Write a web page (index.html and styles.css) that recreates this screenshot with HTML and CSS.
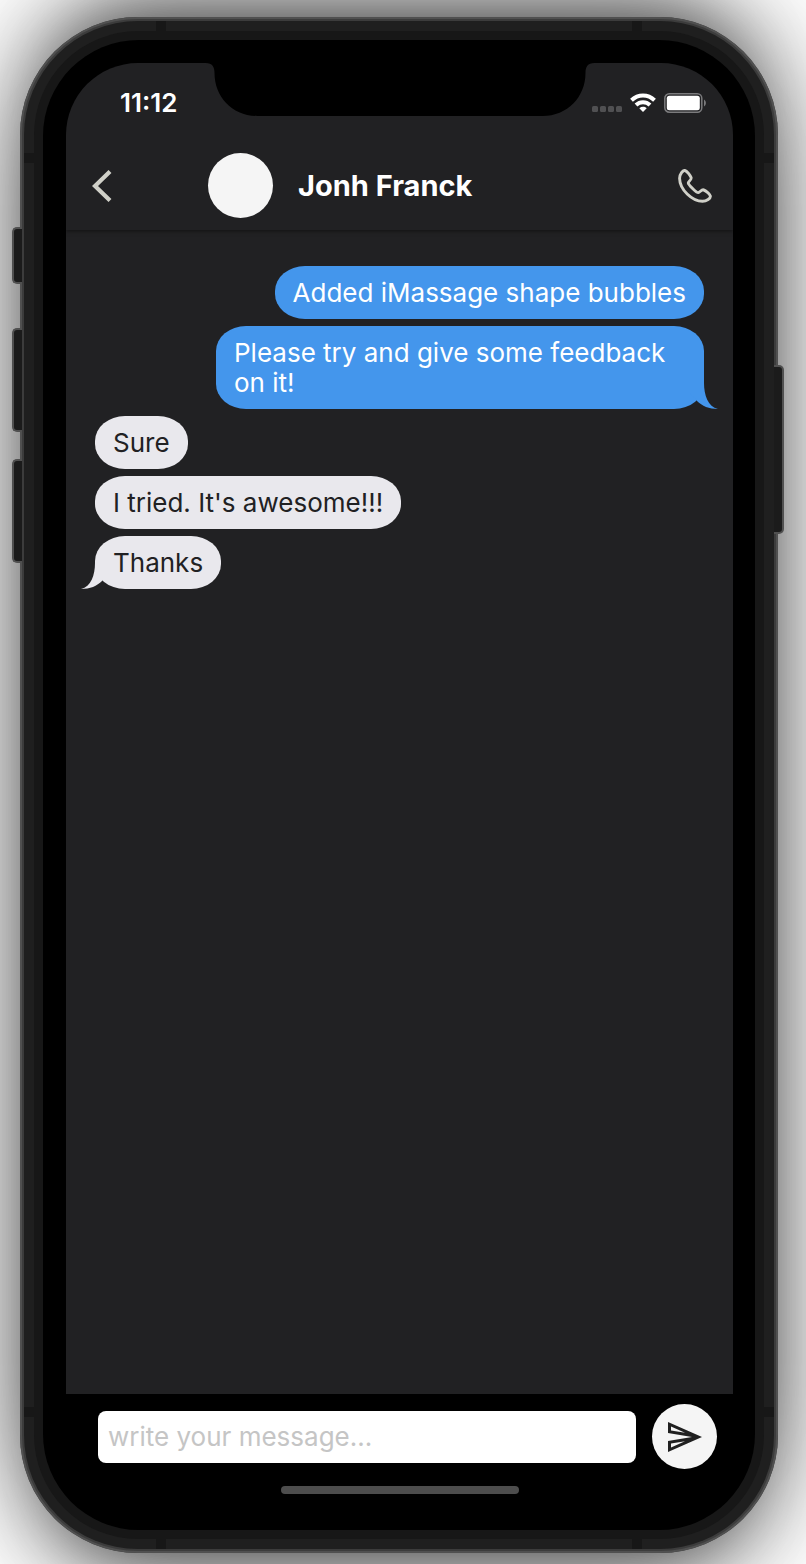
FILE: index.html
```html
<!DOCTYPE html>
<html lang="en">
<head>
<meta charset="utf-8">
<meta name="viewport" content="width=device-width, initial-scale=1">
<title>Jonh Franck</title>
<link rel="stylesheet" href="styles.css">
</head>
<body>
<div class="phone">
  <span class="key key-silent"></span>
  <span class="key key-up"></span>
  <span class="key key-down"></span>
  <span class="key key-power"></span>
  <div class="frame">
    <span class="seam seam-top seam-start"></span>
    <span class="seam seam-top seam-end"></span>
    <span class="seam seam-bottom seam-start"></span>
    <span class="seam seam-bottom seam-end"></span>
    <span class="seam seam-left seam-high"></span>
    <span class="seam seam-left seam-low"></span>
    <span class="seam seam-right seam-high"></span>
    <span class="seam seam-right seam-low"></span>
    <div class="rim">
      <div class="bezel">
        <div class="screen">
          <svg class="notch" viewBox="0 0 389 54" aria-hidden="true"><path d="M0 0C7 0 9 4 9 10C9 34 27 53 52 53H337C362 53 380 34 380 10C380 4 382 0 389 0Z" fill="#000"/></svg>
          <div class="status">
            <span class="time">11:12</span>
            <div class="signals">
              <svg class="cell" viewBox="0 0 30 20" aria-hidden="true" fill="#505052"><rect y="13" width="6" height="6" rx="1.500"/><rect x="8" y="13" width="6" height="6" rx="1.500"/><rect x="16" y="13" width="6" height="6" rx="1.500"/><rect x="24" y="13" width="6" height="6" rx="1.500"/></svg>
              <svg class="wifi" viewBox="0 0 26 20" aria-hidden="true" fill="none" stroke="#fff" stroke-width="4"><path d="M1.500 7.200C8 .8 18 .8 24.500 7.200"/><path d="M6 12C10 8.200 16 8.200 20 12"/><path d="M9.300 15.200C11.500 13.300 14.500 13.300 16.700 15.200L13 19Z" fill="#fff" stroke="none"/></svg>
              <svg class="battery" viewBox="0 0 42 20" aria-hidden="true"><rect x=".8" y=".8" width="37" height="18.400" rx="4.500" fill="none" stroke="#7b7b7d" stroke-width="1.500"/><rect x="2.800" y="2.800" width="33" height="14.400" rx="2.500" fill="#fff"/><path d="M40 6.500C42.500 8 42.500 12 40 13.500Z" fill="#7b7b7d"/></svg>
            </div>
          </div>
          <header class="header">
            <button class="icon-button" type="button" aria-label="Back">
              <svg class="chevron" viewBox="0 0 20 32" aria-hidden="true"><path d="M18 1.500L3 16L18 30.500" fill="none" stroke="#d0d0c8" stroke-width="4.200"/></svg>
            </button>
            <span class="avatar"></span>
            <h1 class="name">Jonh Franck</h1>
            <button class="icon-button call" type="button" aria-label="Call">
              <svg class="handset" viewBox="0 0 34 34" aria-hidden="true"><path d="M7.300 1.600C5 .6 1.500 5.500 1.600 9.500C1.800 20.500 14 32.300 24.500 32.300C28.500 32.300 33 29.200 32.300 26.800C31.700 24.800 27.600 21.800 25.600 20.900C23.600 20.200 22 23.300 20.200 23.600C18.600 23.900 10.200 15.500 10.300 13.900C10.400 12.400 13.800 10.600 13.100 8.600C12.300 6.500 9.400 2.500 7.300 1.600Z" fill="none" stroke="#d0d0c8" stroke-width="2.900" stroke-linejoin="round"/></svg>
            </button>
          </header>
          <main class="messages">
            <p class="bubble sent">Added iMassage shape bubbles</p>
            <p class="bubble sent">Please try and give some feedback on it!<svg class="tail" viewBox="0 0 28 26" aria-hidden="true"><path d="M14 0C14 12 18 24 28 26C19 26 12 23 7 18L0 10V0Z"/></svg></p>
            <p class="bubble received">Sure</p>
            <p class="bubble received">I tried. It's awesome!!!</p>
            <p class="bubble received">Thanks<svg class="tail" viewBox="0 0 28 26" aria-hidden="true"><path d="M14 0C14 12 10 24 0 26C9 26 16 23 21 18L28 10V0Z"/></svg></p>
          </main>
          <form class="composer">
            <input class="field" type="text" placeholder="write your message..." aria-label="Message">
            <button class="send" type="button" aria-label="Send">
              <svg class="plane" viewBox="0 0 34 30" aria-hidden="true"><path d="M0 0L34 15L0 30V19L24 15L0 11ZM3 4.600V8.600L17 10.800ZM3 25.400V21.400L17 19.200Z" fill="#202020" fill-rule="evenodd"/></svg>
            </button>
          </form>
          <div class="home"></div>
        </div>
      </div>
    </div>
  </div>
</div>
</body>
</html>
```
FILE: styles.css
```css
* { box-sizing: border-box; }

body {
  margin: 0;
  min-height: 100vh;
  display: flex;
  padding: 17px 28px 11px 20px;
  background: #fff;
  overflow: hidden;
  font-family: Inter, "Liberation Sans", sans-serif;
  font-size: 26px;
  line-height: 30px;
}

.phone {
  position: relative;
  flex: 1;
  display: flex;
  padding: 4px;
  border-radius: 118px;
  background: #3c3c3c;
  box-shadow:
    inset 0 0 0 2px #505050,
    0 0 110px rgba(0, 0, 0, 0.66),
    0 -50px 70px -40px rgba(0, 0, 0, 0.42),
    0 50px 70px -40px rgba(0, 0, 0, 0.42);
}

.key {
  position: absolute;
  left: -8px;
  width: 10px;
  border: 2px solid #505050;
  border-right: 0;
  border-radius: 5px 0 0 5px;
  background: #1b1b1b;
}
.key-silent { top: 210px; height: 57px; }
.key-up { top: 311px; height: 104px; }
.key-down { top: 442px; height: 104px; }
.key-power {
  top: 348px;
  left: auto;
  right: -6px;
  height: 169px;
  border: 2px solid #505050;
  border-left: 0;
  border-radius: 0 5px 5px 0;
}

.frame {
  position: relative;
  flex: 1;
  display: flex;
  padding: 10px;
  border-radius: 114px;
  background: #1f1f1f;
}

.seam {
  position: absolute;
  width: 10px;
  height: 10px;
  background: #171717;
}
.seam-top { top: 0; }
.seam-bottom { bottom: 0; }
.seam-left { left: 0; }
.seam-right { right: 0; }
.seam-start { left: 132px; }
.seam-end { right: 132px; }
.seam-high { top: 132px; }
.seam-low { bottom: 132px; }

.rim {
  position: relative;
  flex: 1;
  display: flex;
  padding: 9px;
  border-radius: 104px;
  background: #171717;
}

.bezel {
  flex: 1;
  display: flex;
  padding: 23px 22px 0 23px;
  border-radius: 96px;
  background: #000;
}

.screen {
  position: relative;
  flex: 1;
  min-width: 0;
  display: flex;
  flex-direction: column;
  border-radius: 72px 72px 0 0;
  overflow: hidden;
}

.notch {
  position: absolute;
  z-index: 2;
  top: 0;
  left: 50%;
  width: 389px;
  height: 54px;
  transform: translateX(-50%);
}

.status {
  position: relative;
  z-index: 1;
  display: flex;
  align-items: center;
  justify-content: space-between;
  height: 78px;
  padding: 2px 27px 0 54px;
  background: #212123;
  color: #fff;
}
.time { font-weight: 600; }
.signals { display: flex; align-items: center; gap: 8px; }
.cell { width: 30px; height: 20px; }
.wifi { width: 26px; height: 20px; }
.battery { width: 42px; height: 20px; }

.header {
  position: relative;
  display: flex;
  align-items: center;
  height: 89px;
  padding: 0 21px 0 26px;
  background: #212123;
  box-shadow: 0 1px 4px rgba(0, 0, 0, 0.5);
}

.icon-button {
  display: flex;
  padding: 0;
  border: 0;
  background: none;
}
.chevron { width: 20px; height: 32px; }
.call { margin-left: auto; }
.handset { width: 34px; height: 34px; }

.avatar {
  width: 65px;
  height: 65px;
  margin: 0 25px 0 96px;
  border-radius: 50%;
  background: #f5f5f5;
}
.name {
  margin: 0;
  color: #fff;
  font-size: 29px;
  font-weight: 700;
}

.messages {
  flex: 1;
  display: flex;
  flex-direction: column;
  gap: 7px;
  padding: 36px 29px;
  background: #212123;
}
.bubble {
  position: relative;
  max-width: 488px;
  margin: 0;
  padding: 12px 18px 11px;
  border-radius: 30px / 25px;
}
.sent {
  align-self: flex-end;
  background: #4496ec;
  fill: #4496ec;
  color: #fff;
}
.received {
  align-self: flex-start;
  background: #e9e8ed;
  fill: #e9e8ed;
  color: #212123;
}
.tail {
  position: absolute;
  bottom: 0;
  width: 28px;
  height: 26px;
}
.sent .tail { right: -14px; }
.received .tail { left: -14px; }

.composer {
  display: flex;
  align-items: center;
  gap: 16px;
  padding: 10px 16px 17px 32px;
}
.field {
  flex: 1;
  min-width: 0;
  height: 52px;
  padding: 0 10px;
  border: 0;
  border-radius: 8px;
  background: #fff;
  color: #212123;
  font: inherit;
}
.field::placeholder { color: #c5c5c5; opacity: 1; }
.send {
  display: flex;
  align-items: center;
  justify-content: center;
  width: 65px;
  height: 65px;
  padding: 0;
  border: 0;
  border-radius: 50%;
  background: #f5f5f5;
}
.plane { width: 34px; height: 30px; }

.home {
  align-self: center;
  width: 238px;
  height: 8px;
  margin-bottom: 36px;
  border-radius: 4px;
  background: #4d4d4d;
}
```
